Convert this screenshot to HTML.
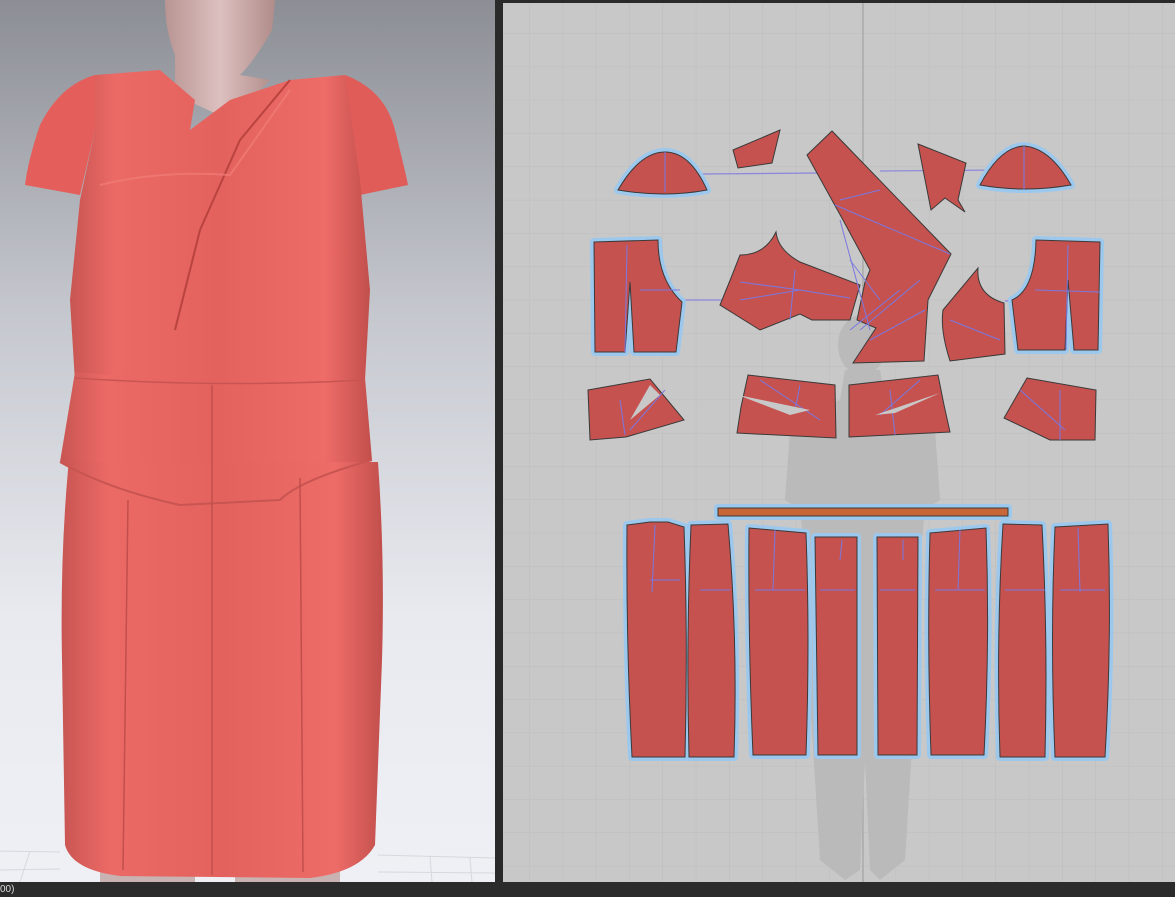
<!DOCTYPE html>
<html><head><meta charset="utf-8"><style>
html,body{margin:0;padding:0;width:1175px;height:897px;overflow:hidden;background:#2b2b2b;font-family:"Liberation Sans",sans-serif}
svg{position:absolute;left:0;top:0}
.st{position:absolute;left:0;top:884px;font-size:10px;color:#ddd}
</style></head><body>
<svg width="1175" height="897" viewBox="0 0 1175 897" xmlns="http://www.w3.org/2000/svg">
<defs>
<linearGradient id="bg3" x1="0" y1="0" x2="0" y2="1">
<stop offset="0" stop-color="#8b8e94"/><stop offset="0.35" stop-color="#c4c7cd"/><stop offset="0.7" stop-color="#e8eaf0"/><stop offset="1" stop-color="#eef0f5"/>
</linearGradient>
<linearGradient id="dr" x1="0" y1="0" x2="1" y2="0">
<stop offset="0" stop-color="#c85552"/><stop offset="0.15" stop-color="#ec6a66"/><stop offset="0.5" stop-color="#e4625e"/><stop offset="0.85" stop-color="#ee6c68"/><stop offset="1" stop-color="#c24f4c"/>
</linearGradient>
<linearGradient id="sk" x1="0" y1="0" x2="1" y2="0">
<stop offset="0" stop-color="#b89593"/><stop offset="0.5" stop-color="#dcc0bf"/><stop offset="1" stop-color="#b08c8a"/>
</linearGradient>
<pattern id="grid" x="496" y="0" width="33.3" height="33.3" patternUnits="userSpaceOnUse">
<path d="M0 0H33.3M0 0V33.3" stroke="#bdbdbd" stroke-width="1" fill="none"/>
</pattern>
</defs>
<rect x="0" y="0" width="495" height="882" fill="url(#bg3)"/>
<g stroke="#d6d8dd" stroke-width="1" fill="none">
<path d="M0 851 L60 852 M378 855 L495 858 M0 870 L60 869 M378 872 L495 873 M30 851 L20 882 M430 856 L432 882 M470 858 L472 882"/>
</g>
<path d="M165 0 L275 0 L272 30 Q255 60 240 75 L270 80 L230 120 L175 95 L175 55 Q165 30 165 0Z" fill="url(#sk)"/>
<rect x="100" y="860" width="240" height="22" fill="#c8b2b2"/>
<rect x="195" y="870" width="40" height="12" fill="#f0f0f4"/>
<path d="M95 75 Q60 85 40 125 Q28 160 25 185 L80 195 L95 130Z" fill="#e45f5b"/>
<path d="M345 75 Q385 90 395 130 Q405 170 408 185 L360 195 L345 130Z" fill="#df5c58"/>
<path d="M95 75 L160 70 L195 100 L190 130 L230 100 L290 80 L345 75 L360 180 L370 290 L365 380 L75 382 L70 300 L80 200 L95 130Z" fill="url(#dr)"/>
<path d="M290 80 L240 140 L200 230 L175 330" stroke="#b9433f" stroke-width="2" fill="none"/>
<path d="M100 185 Q160 170 230 175 L290 90" stroke="#f07b76" stroke-width="2" fill="none" opacity="0.8"/>
<path d="M75 372 Q220 385 365 378 L372 460 Q300 480 280 500 L180 505 Q110 490 60 462Z" fill="url(#dr)"/>
<path d="M68 470 Q70 450 62 462 L378 462 Q385 560 382 660 L375 845 Q360 872 310 878 L120 876 Q72 870 65 845 L62 660 Q60 560 68 470Z" fill="url(#dr)"/>
<path d="M75 378 Q220 388 365 380" stroke="#c85551" stroke-width="1.5" fill="none"/>
<path d="M60 462 Q110 490 180 505 L280 500 Q300 480 372 460" stroke="#c85551" stroke-width="2" fill="none"/>
<g stroke="#c24f4c" stroke-width="1.5" fill="none">
<path d="M212 385 L212 875"/><path d="M128 500 L123 870"/><path d="M300 478 L303 872"/>
</g>
<rect x="495" y="0" width="8" height="882" fill="#2a2a2a"/>
<rect x="503" y="3" width="672" height="879" fill="#c8c8c8"/>
<rect x="503" y="3" width="672" height="879" fill="url(#grid)"/>
<rect x="503" y="0" width="672" height="3" fill="#2a2a2a"/>
<line x1="863" y1="3" x2="863" y2="882" stroke="#aaaaaa" stroke-width="1.5"/>
<g fill="#bababa">
<ellipse cx="862" cy="345" rx="24" ry="30"/>
<path d="M845 370 L880 370 L885 400 Q920 410 935 430 L940 500 L925 510 L920 560 L915 700 L905 860 L880 880 L870 870 L865 760 L860 870 L845 880 L820 860 L810 700 L805 560 L800 510 L785 500 L790 430 Q805 410 840 400Z"/>
</g>
<g stroke="#8a86dc" stroke-width="1.2" fill="none">
<path d="M700 174 L818 173 M880 171 L1000 170 M684 300 L740 300 M1005 301 L1040 300"/>
</g>
<g fill="#c5524f" stroke="#3a3a3a" stroke-width="1">
<g stroke="#9cc8ee" stroke-width="8" stroke-linejoin="round">
<path d="M618 190 Q640 152 665 152 Q690 152 707 190 Q665 198 618 190Z"/>
<path d="M980 185 Q1000 147 1024 146 Q1050 148 1071 185 Q1025 193 980 185Z"/>
<path d="M594 242 L658 240 Q658 280 682 302 L676 352 L634 352 L630 282 L625 352 L595 352Z"/>
<path d="M1012 300 Q1035 290 1036 240 L1100 242 L1098 350 L1074 350 L1068 280 L1065 350 L1018 350Z"/>
<rect x="718" y="508" width="290" height="8"/>
<path d="M627 525 L650 522 L668 522 L684 527 Q688 640 685 757 L632 757 Q626 640 627 525Z"/>
<path d="M691 525 L728 524 Q738 640 734 757 L689 757 Q686 640 691 525Z"/>
<path d="M749 528 L806 533 Q810 640 806 755 L753 755 Q748 640 749 528Z"/>
<path d="M815 537 L857 537 L857 755 L818 755Z"/>
<path d="M877 537 L918 537 L917 755 L878 755Z"/>
<path d="M930 533 L986 528 Q990 640 984 755 L931 755 Q927 640 930 533Z"/>
<path d="M1003 524 L1042 525 Q1048 640 1045 757 L1000 757 Q996 640 1003 524Z"/>
<path d="M1055 527 L1108 524 Q1112 640 1105 757 L1055 757 Q1050 640 1055 527Z"/>
</g>
<path d="M618 190 Q640 152 665 152 Q690 152 707 190 Q665 198 618 190Z"/>
<path d="M980 185 Q1000 147 1024 146 Q1050 148 1071 185 Q1025 193 980 185Z"/>
<path d="M594 242 L658 240 Q658 280 682 302 L676 352 L634 352 L630 282 L625 352 L595 352Z"/>
<path d="M1012 300 Q1035 290 1036 240 L1100 242 L1098 350 L1074 350 L1068 280 L1065 350 L1018 350Z"/>
<rect x="718" y="508" width="290" height="8" fill="#c8663a"/>
<path d="M627 525 L650 522 L668 522 L684 527 Q688 640 685 757 L632 757 Q626 640 627 525Z"/>
<path d="M691 525 L728 524 Q738 640 734 757 L689 757 Q686 640 691 525Z"/>
<path d="M749 528 L806 533 Q810 640 806 755 L753 755 Q748 640 749 528Z"/>
<path d="M815 537 L857 537 L857 755 L818 755Z"/>
<path d="M877 537 L918 537 L917 755 L878 755Z"/>
<path d="M930 533 L986 528 Q990 640 984 755 L931 755 Q927 640 930 533Z"/>
<path d="M1003 524 L1042 525 Q1048 640 1045 757 L1000 757 Q996 640 1003 524Z"/>
<path d="M1055 527 L1108 524 Q1112 640 1105 757 L1055 757 Q1050 640 1055 527Z"/>
<path d="M733 150 L780 130 L772 163 L738 168Z"/>
<path d="M807 155 L832 131 L951 254 L928 300 L924 361 L853 363 L876 328 L857 320 L865 282 L870 270 L843 220Z"/>
<path d="M918 144 L966 163 L958 200 L965 212 L945 198 L931 210Z"/>
<path d="M720 305 L731 278 L740 255 Q765 255 776 232 Q778 250 800 262 L860 285 L850 320 L812 320 L800 314 L760 330Z"/>
<path d="M943 310 L978 268 Q976 295 1004 303 L1005 354 L950 361 Q940 330 943 310Z"/>
<path d="M588 390 L650 379 L684 420 L626 437 L590 440Z"/>
<path d="M748 375 L835 385 L836 438 L737 433 L741 407Z"/>
<path d="M849 385 L938 375 L944 405 L950 432 L849 437Z"/>
<path d="M1027 378 L1096 390 L1095 440 L1050 440 L1004 418Z"/>
</g>
<g stroke="#7a78e0" stroke-width="1" fill="none">
<path d="M665 152 L665 192 M1024 146 L1024 190 M627 245 L625 352 M640 290 L680 290 M1068 245 L1066 350 M1035 290 L1100 292"/>
<path d="M840 200 L880 190 M835 205 L950 254 M840 220 L870 330 M850 260 L880 300 M850 330 L900 290 M860 330 L920 280 M870 340 L925 310"/>
<path d="M740 282 L800 290 L850 298 M795 270 L790 320 M740 300 L800 290 M950 320 L1000 340"/>
<path d="M620 400 L625 435 M665 390 L630 430 M760 380 L820 420 M800 385 L795 410 M920 380 L880 415 M890 390 L895 435 M1020 390 L1065 430 M1060 390 L1060 440"/>
<path d="M650 580 L680 580 M700 590 L730 590 M755 590 L805 590 M820 590 L855 590 M880 590 L915 590 M935 590 L985 590 M1005 590 L1045 590 M1060 590 L1105 590 M655 525 L652 592 M775 530 L773 590 M842 540 L840 560 M903 540 L903 560 M960 530 L958 590 M1078 528 L1080 592"/>
</g>
<g fill="#c8c8c8">
<path d="M738 395 L810 410 L790 415Z"/><path d="M940 393 L875 415 L895 413Z"/>
<path d="M650 385 L630 420 L660 395Z"/><path d="M1032 385 L1060 420 L1040 395Z"/>
</g>
</svg>
<div class="st">00)</div>
</body></html>
